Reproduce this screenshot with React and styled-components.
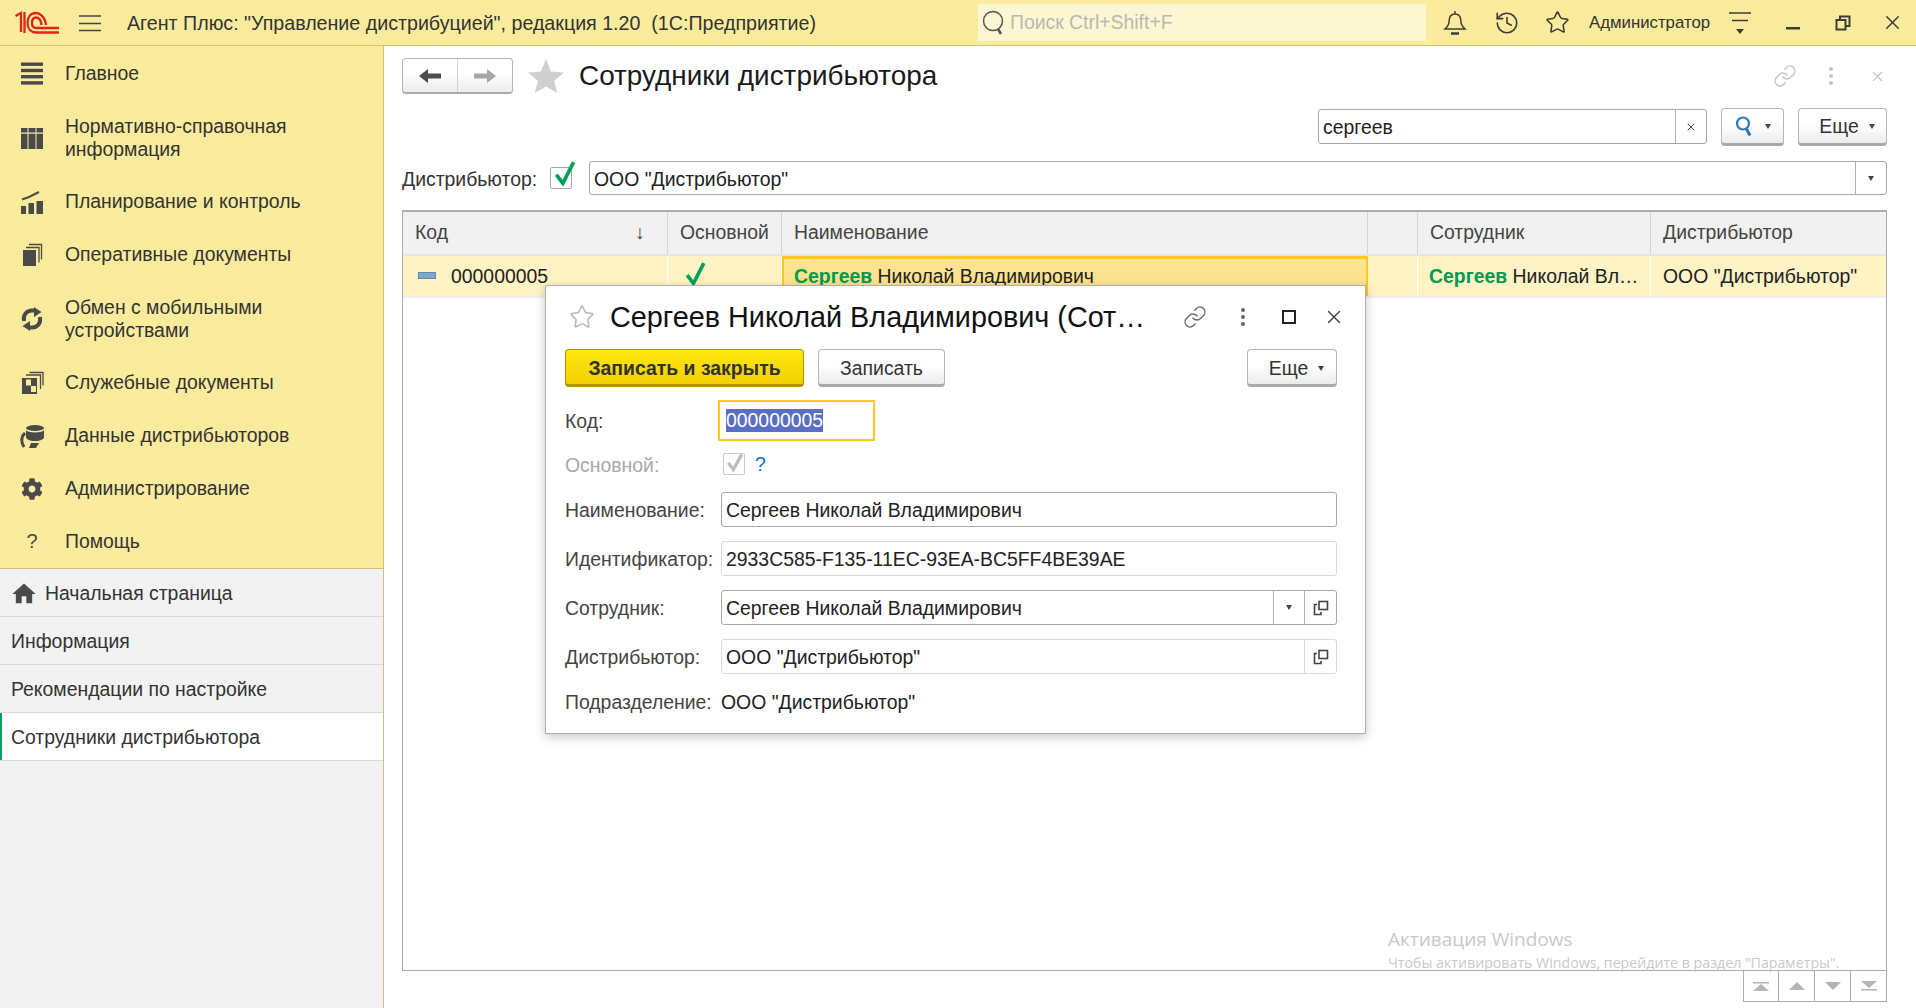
import React from 'react'
import styled, { createGlobalStyle } from 'styled-components'
import { Link as LinkIcon, History, Star, X } from 'lucide-react'
import { FaCog } from 'react-icons/fa'
import { MdHome } from 'react-icons/md'

const GlobalStyle = createGlobalStyle`
    html, body, #root {
        margin: 0;
        height: 100%;
    }
    body {
        font-family: "Liberation Sans", Arial, sans-serif;
        font-size: 19.4px;
        color: #333;
        background: #fff;
        overflow: hidden;
    }
    * {
        box-sizing: border-box;
    }
`

const Page = styled.div`
    display: flex;
    flex-direction: column;
    height: 100vh;
`

const TopBar = styled.header`
    display: flex;
    align-items: center;
    flex: 0 0 46px;
    padding-left: 15px;
    background: #fbec9d;
    border-bottom: 1px solid #cfc07a;
`
const Logo = styled.svg`
    width: 44px;
    height: 24px;
    flex: none;
`
const Burger = styled.svg`
    width: 22px;
    height: 18px;
    margin-left: 20px;
    flex: none;
`
const AppTitle = styled.div`
    margin-left: 26px;
    width: 851px;
    padding-top: 2px;
    font-size: 19.65px;
    white-space: pre;
`
const GlobalSearch = styled.div`
    display: flex;
    align-items: center;
    gap: 5px;
    width: 448px;
    height: 37px;
    padding-left: 4px;
    background: #fdf6d2;
    color: #b9b9b0;
    font-size: 19.4px;
    white-space: nowrap;
`
const TopIcon = styled.div`
    display: flex;
    justify-content: center;
    align-items: center;
    flex: none;
    width: ${p => p.$w || 30}px;
    margin-left: ${p => p.$ml || 0}px;
    color: #3c3c3c;
`
const UserName = styled.div`
    margin-left: 17px;
    width: 136px;
    font-size: 16.8px;
    white-space: nowrap;
`

const Body = styled.div`
    display: flex;
    flex: 1;
    min-height: 0;
`
const Sidebar = styled.aside`
    display: flex;
    flex-direction: column;
    flex: 0 0 384px;
    background: #f2f2f2;
    border-right: 1px solid #cfc07a;
`
const Sections = styled.nav`
    background: #fbec9d;
    border-bottom: 1px solid #cfc07a;
`
const Section = styled.div`
    display: flex;
    align-items: center;
    gap: 21px;
    height: ${p => p.$h}px;
    padding-left: 20px;
    line-height: 23px;
`
const SectionIcon = styled.div`
    display: flex;
    justify-content: center;
    align-items: center;
    flex: 0 0 24px;
    height: 24px;
    color: #4a4a4a;
    font-size: 20px;
`
const Tab = styled.div`
    display: flex;
    align-items: center;
    gap: 7px;
    height: 48px;
    padding: 2px 0 0 ${p => (p.$home ? 10 : 11)}px;
    border-bottom: 1px solid #d8d8d8;
    background: ${p => (p.$active ? '#fff' : 'transparent')};
    box-shadow: ${p => (p.$active ? 'inset 2px 0 0 #00a160' : 'none')};
`

const Main = styled.main`
    position: relative;
    display: flex;
    flex-direction: column;
    flex: 1;
    min-width: 0;
    padding: 12px 29px 6px 18px;
`
const HeaderRow = styled.div`
    display: flex;
    align-items: center;
    height: 36px;
`
const NavGroup = styled.div`
    display: flex;
    width: 111px;
    height: 36px;
    border: 1px solid #b4b4b4;
    border-bottom: 2px solid #aaa;
    border-radius: 4px;
    background: linear-gradient(#fff 40%, #ececec);
`
const NavButton = styled.div`
    display: flex;
    justify-content: center;
    align-items: center;
    flex: 1;
    & + & {
        border-left: 1px solid #d0d0d0;
    }
`
const PageStar = styled.svg`
    width: 36px;
    height: 34px;
    margin-left: 15px;
    flex: none;
`
const PageTitle = styled.h1`
    margin: 0 0 0 15px;
    font-size: 27.9px;
    font-weight: 400;
    color: #1a1a1a;
`
const WindowTools = styled.div`
    display: flex;
    align-items: center;
    margin-left: auto;
    margin-right: -13px;
    color: #c4c4c4;
`
const ToolSlot = styled.div`
    display: flex;
    justify-content: center;
    align-items: center;
    width: ${p => p.$w || 46}px;
    color: ${p => p.$color || 'inherit'};
`
const Dots = styled.span`
    display: block;
    width: 4px;
    height: 4px;
    border-radius: 50%;
    background: currentColor;
    box-shadow: 0 -7px 0 currentColor, 0 7px 0 currentColor;
`
const SearchRow = styled.div`
    display: flex;
    justify-content: flex-end;
    align-items: center;
    gap: 14px;
    height: 39px;
    margin-top: 13px;
`
const SearchField = styled.div`
    display: flex;
    width: 389px;
    height: 35px;
    border: 1px solid #a8a8a8;
    border-radius: 3px;
    background: #fff;
`
const FieldText = styled.div`
    flex: 1;
    min-width: 0;
    padding: 0 4px;
    line-height: 34px;
    white-space: nowrap;
    color: #222;
`
const FieldButton = styled.div`
    display: flex;
    justify-content: center;
    align-items: center;
    flex: 0 0 ${p => p.$w || 31}px;
    border-left: 1px solid ${p => p.$line || '#b0b0b0'};
    color: #444;
`
const Button = styled.div`
    display: flex;
    justify-content: center;
    align-items: center;
    gap: ${p => p.$gap || 0}px;
    width: ${p => p.$w}px;
    height: 38px;
    margin-left: ${p => p.$ml || 0};
    padding-top: 2px;
    border: 1px solid #b6b6b6;
    border-bottom: 3px solid #a9a9a9;
    border-radius: 4px;
    background: linear-gradient(#fff 45%, #ececec);
    color: #333;
`
const MoreButton = styled(Button)`
    padding-left: 9px;
`
const PrimaryButton = styled(Button)`
    border-color: #ad9500;
    background: linear-gradient(#fde70f, #f3d000);
    font-weight: 700;
`
const Caret = styled.span`
    display: block;
    width: 0;
    height: 0;
    border-left: 3.5px solid transparent;
    border-right: 3.5px solid transparent;
    border-top: 5px solid ${p => p.$color || '#444'};
`
const FilterRow = styled.div`
    display: flex;
    align-items: center;
    height: 34px;
    margin-top: 15px;
`
const FilterLabel = styled.div`
    width: 148px;
    padding-top: 2px;
`
const CheckBox = styled.div`
    position: relative;
    flex: none;
    width: 22px;
    height: 22px;
    margin-left: ${p => p.$ml || 0}px;
    border: 1px solid ${p => p.$line || '#a8a8a8'};
    border-radius: 2px;
    background: #fff;
    svg {
        position: absolute;
        left: 1px;
        bottom: 2px;
    }
`
const FilterField = styled.div`
    display: flex;
    flex: 1;
    height: 34px;
    margin-left: 17px;
    border: 1px solid #a8a8a8;
    border-radius: 3px;
`

const Table = styled.div`
    position: relative;
    flex: 1;
    min-height: 0;
    margin-top: 15px;
    border: 1px solid #adadad;
    border-top-width: 2px;
`
const Columns = '265px 114px 586px 50px 233px 1fr'
const HeadRow = styled.div`
    display: grid;
    grid-template-columns: ${Columns};
    height: 44px;
    background: #f1f1f1;
    border-bottom: 2px solid #e6e6e6;
`
const HeadCell = styled.div`
    display: flex;
    align-items: center;
    justify-content: space-between;
    padding: 0 12px 2px;
    color: #444;
    border-right: 1px solid #d6d6d6;
    &:last-child {
        border-right: 0;
    }
`
const SortArrow = styled.span`
    margin-right: 10px;
`
const DataRow = styled.div`
    display: grid;
    grid-template-columns: ${Columns};
    height: 42px;
    background: #fdf3c4;
    border-bottom: 2px solid #eee;
    color: #222;
`
const DataCell = styled.div`
    display: flex;
    align-items: center;
    gap: ${p => p.$gap || 0}px;
    min-width: 0;
    padding: 0 ${p => p.$padX || 12}px;
    white-space: nowrap;
    overflow: hidden;
    border-right: 1px solid #fff;
    &:last-child {
        border-right: 0;
    }
`
const ActiveCell = styled(DataCell)`
    background: #fde28f;
    border: 2px solid #fdc81c;
    border-top-width: 3px;
    padding: 0 10px;
`
const RowCheck = styled.div`
    display: flex;
    margin-top: -6px;
`
const Ellipsis = styled.span`
    overflow: hidden;
    text-overflow: ellipsis;
`
const Match = styled.b`
    color: #00994d;
`
const RowMark = styled.span`
    display: block;
    flex: none;
    width: 18px;
    height: 7px;
    margin: -2px 0 0 3px;
    background: #7fa9cc;
    border: 1px solid #5b8bb3;
`
const Pager = styled.div`
    display: flex;
    justify-content: flex-end;
    height: 31px;
`
const PagerButton = styled.div`
    display: flex;
    justify-content: center;
    align-items: center;
    width: 36px;
    border: 1px solid #adadad;
    border-top: 0;
    border-left-width: ${p => (p.$first ? 1 : 0)}px;
`
const Watermark = styled.div`
    position: absolute;
    left: 1004px;
    top: 880px;
    color: #c9c9c9;
    font-family: "Open Sans", sans-serif;
    font-size: 14.2px;
    white-space: nowrap;
    pointer-events: none;
`
const WatermarkTitle = styled.div`
    font-size: 19px;
    line-height: 27px;
`

const Dialog = styled.section`
    position: absolute;
    left: 161px;
    top: 239px;
    width: 821px;
    height: 449px;
    padding: 0 28px 0 19px;
    background: #fff;
    border: 1px solid #b0b0b0;
    box-shadow: 0 3px 10px rgba(0, 0, 0, 0.22);
`
const DialogHead = styled.div`
    display: flex;
    align-items: center;
    height: 63px;
`
const DialogStar = styled.div`
    display: flex;
    flex: none;
    width: 26px;
    margin: -2px 0 0 4px;
    color: #b8bcc0;
`
const DialogTitle = styled.h2`
    flex: none;
    width: 537px;
    margin: 0 0 0 15px;
    font-size: 28.8px;
    font-weight: 400;
    color: #111;
    white-space: nowrap;
    overflow: hidden;
    text-overflow: ellipsis;
`
const DialogTools = styled.div`
    display: flex;
    align-items: center;
    flex: none;
    margin: -2px -21px 0 24px;
    color: #666;
`
const DialogButtons = styled.div`
    display: flex;
    gap: 14px;
    height: 38px;
`
const FormRow = styled.div`
    display: flex;
    align-items: center;
    height: ${p => p.$h || 35}px;
    margin-top: ${p => p.$mt || 14}px;
`
const Label = styled.div`
    flex: 0 0 156px;
    padding-top: 2px;
    color: ${p => (p.$muted ? '#a9a9a9' : '#444')};
    white-space: nowrap;
`
const FocusField = styled.div`
    display: flex;
    align-items: center;
    width: 157px;
    height: 41px;
    margin-left: -3px;
    padding-left: 6px;
    border: 2px solid #fcc81e;
`
const Selected = styled.span`
    padding: 1px 0;
    background: #5a6fc4;
    color: #fff;
    line-height: 21px;
`
const Help = styled.span`
    margin-left: 10px;
    color: #0f76b8;
`
const Field = styled.div`
    display: flex;
    flex: 1;
    height: 35px;
    border: 1px solid ${p => (p.$soft ? '#d9d9d9' : '#a8a8a8')};
    border-radius: 3px;
`
const PlainValue = styled.div`
    padding-top: 2px;
    color: #222;
`

const GreenCheck = ({ size = 24 }) => (
    <svg width={size} height={size} viewBox="0 0 24 24">
        <path d="M4 13.5 L10 21.5 L20 2" fill="none" stroke="#00a05a" strokeWidth="3.4" />
    </svg>
)

const OpenIcon = () => (
    <svg width="16" height="16" viewBox="0 0 16 16" fill="none" stroke="#444" strokeWidth="1.6">
        <rect x="6" y="1.5" width="8.5" height="8" />
        <path d="M4 4.5 H1.5 V14.5 H8 V12" />
    </svg>
)

const Triangle = ({ d }) => (
    <svg width="20" height="14" viewBox="0 0 20 14">
        <path d={d} fill="#b5b5b5" />
    </svg>
)

const SectionIcons = {
    menu: (
        <svg width="24" height="24" viewBox="0 0 24 24" fill="#4a4a4a">
            <rect x="1" y="1.5" width="22" height="3.4" />
            <rect x="1" y="7.8" width="22" height="3.4" />
            <rect x="1" y="14" width="22" height="3.4" />
            <rect x="1" y="20.2" width="22" height="3.4" />
        </svg>
    ),
    table: (
        <svg width="24" height="24" viewBox="0 0 24 24" fill="#4a4a4a">
            <path d="M1 2h6.5v21H1zM8.5 2h7v21h-7zM16.500 2H23v21h-6.500z" />
            <rect x="0" y="6.500" width="24" height="1.200" fill="#fbec9d" />
        </svg>
    ),
    chart: (
        <svg width="24" height="24" viewBox="0 0 24 24" fill="#4a4a4a">
            <path d="M1 16h5v8H1zM8.500 13h5.500v11H8.500zM16.500 11H23v13h-6.500z" />
            <path d="M2 9.500 L9 7 L19 2" fill="none" stroke="#4a4a4a" strokeWidth="2" />
        </svg>
    ),
    docs: (
        <svg width="24" height="24" viewBox="0 0 24 24">
            <path d="M3 7h13v16H3z" fill="#4a4a4a" />
            <path d="M6 4.500h13v15M9 1.500h12.500v15" fill="none" stroke="#4a4a4a" strokeWidth="1.300" />
        </svg>
    ),
    refresh: (
        <svg width="24" height="24" viewBox="0 0 24 24" fill="#4a4a4a">
            <path d="M4 14 C2.800 7.500 7 3.500 12 3.500 h3 M20 10 C21.200 16.500 17 20.500 12 20.500 h-3" fill="none" stroke="#4a4a4a" strokeWidth="4" />
            <path d="M14 0 l7.500 5 -7.500 5z M10 24 l-7.500-5 7.500-5z" />
        </svg>
    ),
    service: (
        <svg width="24" height="24" viewBox="0 0 24 24">
            <path d="M2 7h15v16H2z" fill="#4a4a4a" />
            <path d="M6 8.500h5v6H6z M11 15h5v6h-5z" fill="#fbec9d" />
            <path d="M6 4h14.500v14M9.500 1.500H23v13" fill="none" stroke="#4a4a4a" strokeWidth="1.300" />
        </svg>
    ),
    data: (
        <svg width="24" height="24" viewBox="0 0 24 24" fill="#4a4a4a">
            <ellipse cx="15" cy="4" rx="9" ry="3" />
            <path d="M6 6.500c3 2.500 15 2.500 18 0V14c-2 2.500-6 3-9 3s-7-.5-9-3z" />
            <path d="M5 9C1.500 12 .5 18 4 23" fill="none" stroke="#4a4a4a" strokeWidth="3" />
            <path d="M11 19h8l-3 5h-7z" />
        </svg>
    ),
    gear: <FaCog size={22} />,
    help: <span>?</span>,
}

const sections = [
    { icon: 'menu', h: 54, text: 'Главное' },
    { icon: 'table', h: 75, text: <>Нормативно-справочная<br />информация</> },
    { icon: 'chart', h: 53, text: 'Планирование и контроль' },
    { icon: 'docs', h: 53, text: 'Оперативные документы' },
    { icon: 'refresh', h: 75, text: <>Обмен с мобильными<br />устройствами</> },
    { icon: 'service', h: 53, text: 'Служебные документы' },
    { icon: 'data', h: 53, text: 'Данные дистрибьюторов' },
    { icon: 'gear', h: 53, text: 'Администрирование' },
    { icon: 'help', h: 53, text: 'Помощь' },
]

function App() {
    return (
        <Page>
            <GlobalStyle />
            <TopBar>
                <Logo viewBox="0 0 44 24" fill="none" stroke="#e2231a" strokeWidth="2.300">
                    <path d="M0.500 5 L6 2 V21 M9.500 1 V22" />
                    <path d="M31 14 C30 5 24 2 21 2 C15 2 12.500 7 12.500 12 C12.500 18 16 21.500 21 21.500 H44" />
                    <path d="M26.500 14 C26 9 24 6.500 21 6.500 C18 6.500 17 9 17 12 C17 15 18.500 17 21 17 H44" />
                </Logo>
                <Burger viewBox="0 0 22 18" fill="none" stroke="#444" strokeWidth="1.500">
                    <path d="M0 2h22M0 9.500h22M0 16.500h22" />
                </Burger>
                <AppTitle>Агент Плюс: "Управление дистрибуцией", редакция 1.20  (1С:Предприятие)</AppTitle>
                <GlobalSearch>
                    <svg width="23" height="26" viewBox="0 0 23 26" fill="none" stroke="#555" strokeWidth="1.500">
                        <circle cx="11" cy="11" r="9.500" />
                        <path d="M16 19l3 5" strokeWidth="2.500" />
                    </svg>
                    Поиск Ctrl+Shift+F
                </GlobalSearch>
                <TopIcon $ml={14}>
                    <svg width="24" height="26" viewBox="0 0 24 26" fill="none" stroke="#3c3c3c" strokeWidth="1.500">
                        <path d="M12 1v3M12 4c-5 0-6 4-6 8 0 3-2 5-4 7h20c-2-2-4-4-4-7 0-4-1-8-6-8z" />
                        <path d="M8 23.500h8" strokeWidth="2.500" />
                    </svg>
                </TopIcon>
                <TopIcon $ml={22}><History size={26} strokeWidth={1.500} /></TopIcon>
                <TopIcon $ml={20}><Star size={25} strokeWidth={1.500} /></TopIcon>
                <UserName>Администратор</UserName>
                <TopIcon $ml={0}>
                    <svg width="24" height="24" viewBox="0 0 24 24" fill="none" stroke="#3c3c3c" strokeWidth="1.500">
                        <path d="M1 2h22M4 9.500h16" />
                        <path d="M8 18h8l-4 5z" fill="#3c3c3c" stroke="none" />
                    </svg>
                </TopIcon>
                <TopIcon $ml={23}>
                    <svg width="16" height="16" viewBox="0 0 16 16"><rect x="1" y="12" width="14" height="2.500" fill="#3c3c3c" /></svg>
                </TopIcon>
                <TopIcon $ml={20}>
                    <svg width="16" height="16" viewBox="0 0 16 16" fill="none" stroke="#3c3c3c" strokeWidth="2">
                        <path d="M1.500 5h9v9.500h-9z" />
                        <path d="M5 5V1.500h9.500V11H11" />
                    </svg>
                </TopIcon>
                <TopIcon $ml={19}><X size={23} strokeWidth={1.500} /></TopIcon>
            </TopBar>
            <Body>
                <Sidebar>
                    <Sections>
                        {sections.map(s => (
                            <Section key={s.icon} $h={s.h}>
                                <SectionIcon>{SectionIcons[s.icon]}</SectionIcon>
                                <div>{s.text}</div>
                            </Section>
                        ))}
                    </Sections>
                    <Tab $home>
                        <MdHome size={28} color="#4a4a4a" />
                        Начальная страница
                    </Tab>
                    <Tab>Информация</Tab>
                    <Tab>Рекомендации по настройке</Tab>
                    <Tab $active>Сотрудники дистрибьютора</Tab>
                </Sidebar>
                <Main>
                    <HeaderRow>
                        <NavGroup>
                            <NavButton>
                                <svg width="24" height="18" viewBox="0 0 24 18"><path d="M1 9l9-7v4.500h13v5H10V16z" fill="#4d4d4d" /></svg>
                            </NavButton>
                            <NavButton>
                                <svg width="24" height="18" viewBox="0 0 24 18"><path d="M23 9l-9-7v4.500H1v5h13V16z" fill="#a6a6a6" /></svg>
                            </NavButton>
                        </NavGroup>
                        <PageStar viewBox="0 0 36 34"><path d="M18 0l5 12.500 13 1-10 8.500 3.300 12L18 27.500 6.700 34 10 22 0 13.500l13-1z" fill="#cfcfcf" /></PageStar>
                        <PageTitle>Сотрудники дистрибьютора</PageTitle>
                        <WindowTools>
                            <ToolSlot><LinkIcon size={24} strokeWidth={1.400} /></ToolSlot>
                            <ToolSlot><Dots /></ToolSlot>
                            <ToolSlot><X size={17} strokeWidth={1.500} /></ToolSlot>
                        </WindowTools>
                    </HeaderRow>
                    <SearchRow>
                        <SearchField>
                            <FieldText>сергеев</FieldText>
                            <FieldButton><X size={12} strokeWidth={2} /></FieldButton>
                        </SearchField>
                        <Button $w={63} $gap={10}>
                            <svg width="20" height="24" viewBox="0 0 20 24" fill="none" stroke="#2a78b8" strokeWidth="2.200">
                                <circle cx="8" cy="8.500" r="6" />
                                <path d="M11.500 14l3.500 6.500" strokeWidth="3" />
                            </svg>
                            <Caret />
                        </Button>
                        <MoreButton $w={89} $gap={10}>Еще <Caret /></MoreButton>
                    </SearchRow>
                    <FilterRow>
                        <FilterLabel>Дистрибьютор:</FilterLabel>
                        <CheckBox><GreenCheck size={26} /></CheckBox>
                        <FilterField>
                            <FieldText>ООО "Дистрибьютор"</FieldText>
                            <FieldButton><Caret /></FieldButton>
                        </FilterField>
                    </FilterRow>
                    <Table>
                        <HeadRow>
                            <HeadCell>Код <SortArrow>↓</SortArrow></HeadCell>
                            <HeadCell>Основной</HeadCell>
                            <HeadCell>Наименование</HeadCell>
                            <HeadCell />
                            <HeadCell>Сотрудник</HeadCell>
                            <HeadCell>Дистрибьютор</HeadCell>
                        </HeadRow>
                        <DataRow>
                            <DataCell $gap={15}>
                                <RowMark />
                                000000005
                            </DataCell>
                            <DataCell $padX={15}><RowCheck><GreenCheck size={25} /></RowCheck></DataCell>
                            <ActiveCell><span><Match>Сергеев</Match> Николай Владимирович</span></ActiveCell>
                            <DataCell />
                            <DataCell $padX={11}><Ellipsis><Match>Сергеев</Match> Николай Владимирович</Ellipsis></DataCell>
                            <DataCell>ООО "Дистрибьютор"</DataCell>
                        </DataRow>
                    </Table>
                    <Pager>
                        <PagerButton $first><Triangle d="M2 3h16v1.500H2zM10 5l8 7H2z" /></PagerButton>
                        <PagerButton><Triangle d="M10 3l8 8H2z" /></PagerButton>
                        <PagerButton><Triangle d="M2 3h16l-8 8z" /></PagerButton>
                        <PagerButton><Triangle d="M2 2h16l-8 7zM2 10h16v1.500H2z" /></PagerButton>
                    </Pager>
                    <Watermark>
                        <WatermarkTitle>Активация Windows</WatermarkTitle>
                        Чтобы активировать Windows, перейдите в раздел "Параметры".
                    </Watermark>
                    <Dialog>
                        <DialogHead>
                            <DialogStar><Star size={26} strokeWidth={1.500} /></DialogStar>
                            <DialogTitle>Сергеев Николай Владимирович (Сотрудник дистрибьютора)</DialogTitle>
                            <DialogTools>
                                <ToolSlot $w={48}><LinkIcon size={24} strokeWidth={1.400} /></ToolSlot>
                                <ToolSlot $w={48}><Dots /></ToolSlot>
                                <ToolSlot $w={44}>
                                    <svg width="14" height="14" viewBox="0 0 14 14" fill="none" stroke="#222" strokeWidth="2"><rect x="1" y="1" width="12" height="12" /></svg>
                                </ToolSlot>
                                <ToolSlot $w={46} $color="#444"><X size={22} strokeWidth={1.500} /></ToolSlot>
                            </DialogTools>
                        </DialogHead>
                        <DialogButtons>
                            <PrimaryButton $w={239}>Записать и закрыть</PrimaryButton>
                            <Button $w={127}>Записать</Button>
                            <MoreButton $w={90} $gap={10} $ml="auto">Еще <Caret /></MoreButton>
                        </DialogButtons>
                        <FormRow $h={41} $mt={13}>
                            <Label>Код:</Label>
                            <FocusField><Selected>000000005</Selected></FocusField>
                        </FormRow>
                        <FormRow $h={24} $mt={11}>
                            <Label $muted>Основной:</Label>
                            <CheckBox $ml={2} $line="#c8c8c8">
                                <svg width="20" height="20" viewBox="0 0 24 24"><path d="M4 13l6 8L20 3" fill="none" stroke="#bdbdbd" strokeWidth="4" /></svg>
                            </CheckBox>
                            <Help>?</Help>
                        </FormRow>
                        <FormRow $mt={16}>
                            <Label>Наименование:</Label>
                            <Field><FieldText>Сергеев Николай Владимирович</FieldText></Field>
                        </FormRow>
                        <FormRow>
                            <Label>Идентификатор:</Label>
                            <Field $soft><FieldText>2933C585-F135-11EC-93EA-BC5FF4BE39AE</FieldText></Field>
                        </FormRow>
                        <FormRow>
                            <Label>Сотрудник:</Label>
                            <Field>
                                <FieldText>Сергеев Николай Владимирович</FieldText>
                                <FieldButton $w={31}><Caret /></FieldButton>
                                <FieldButton $w={32}><OpenIcon /></FieldButton>
                            </Field>
                        </FormRow>
                        <FormRow>
                            <Label>Дистрибьютор:</Label>
                            <Field $soft>
                                <FieldText>ООО "Дистрибьютор"</FieldText>
                                <FieldButton $w={32} $line="#d9d9d9"><OpenIcon /></FieldButton>
                            </Field>
                        </FormRow>
                        <FormRow $h={28} $mt={13}>
                            <Label>Подразделение:</Label>
                            <PlainValue>ООО "Дистрибьютор"</PlainValue>
                        </FormRow>
                    </Dialog>
                </Main>
            </Body>
        </Page>
    )
}

export default App
